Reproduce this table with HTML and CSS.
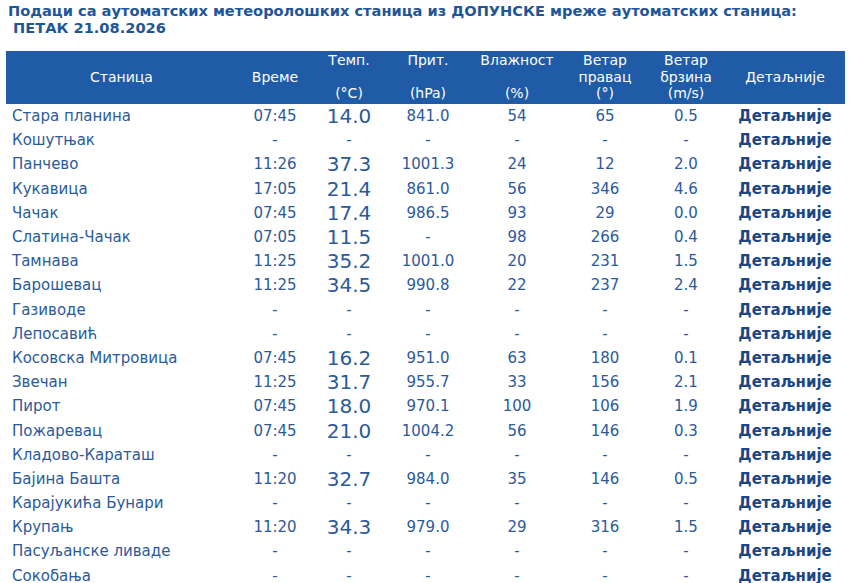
FILE: index.html
```html
<!DOCTYPE html>
<html lang="sr">
<head>
<meta charset="utf-8">
<title>Подаци са аутоматских метеоролошких станица</title>
<link rel="stylesheet" href="styles.css">
</head>
<body>
<h1 class="title">Подаци са аутоматских метеоролошких станица из ДОПУНСКЕ мреже аутоматских станица:<br>&nbsp;ПЕТАК 21.08.2026</h1>
<table class="data">
<colgroup>
<col class="c-name"><col class="c-time"><col class="c-temp"><col class="c-pres"><col class="c-hum"><col class="c-wdir"><col class="c-wspd"><col class="c-det">
</colgroup>
<thead>
<tr>
<th>Станица</th>
<th>Време</th>
<th>Темп.<br><br>(°C)</th>
<th>Прит.<br><br>(hPa)</th>
<th>Влажност<br><br>(%)</th>
<th>Ветар<br>правац<br>(°)</th>
<th>Ветар<br>брзина<br>(m/s)</th>
<th>Детаљније</th>
</tr>
</thead>
<tbody>
<tr><td class="name">Стара планина</td><td>07:45</td><td class="temp">14.0</td><td>841.0</td><td>54</td><td>65</td><td>0.5</td><td class="det">Детаљније</td></tr>
<tr><td class="name">Кошутњак</td><td>-</td><td class="temp dash">-</td><td>-</td><td>-</td><td>-</td><td>-</td><td class="det">Детаљније</td></tr>
<tr><td class="name">Панчево</td><td>11:26</td><td class="temp">37.3</td><td>1001.3</td><td>24</td><td>12</td><td>2.0</td><td class="det">Детаљније</td></tr>
<tr><td class="name">Кукавица</td><td>17:05</td><td class="temp">21.4</td><td>861.0</td><td>56</td><td>346</td><td>4.6</td><td class="det">Детаљније</td></tr>
<tr><td class="name">Чачак</td><td>07:45</td><td class="temp">17.4</td><td>986.5</td><td>93</td><td>29</td><td>0.0</td><td class="det">Детаљније</td></tr>
<tr><td class="name">Слатина-Чачак</td><td>07:05</td><td class="temp">11.5</td><td>-</td><td>98</td><td>266</td><td>0.4</td><td class="det">Детаљније</td></tr>
<tr><td class="name">Тамнава</td><td>11:25</td><td class="temp">35.2</td><td>1001.0</td><td>20</td><td>231</td><td>1.5</td><td class="det">Детаљније</td></tr>
<tr><td class="name">Барошевац</td><td>11:25</td><td class="temp">34.5</td><td>990.8</td><td>22</td><td>237</td><td>2.4</td><td class="det">Детаљније</td></tr>
<tr><td class="name">Газиводе</td><td>-</td><td class="temp dash">-</td><td>-</td><td>-</td><td>-</td><td>-</td><td class="det">Детаљније</td></tr>
<tr><td class="name">Лепосавић</td><td>-</td><td class="temp dash">-</td><td>-</td><td>-</td><td>-</td><td>-</td><td class="det">Детаљније</td></tr>
<tr><td class="name">Косовска Митровица</td><td>07:45</td><td class="temp">16.2</td><td>951.0</td><td>63</td><td>180</td><td>0.1</td><td class="det">Детаљније</td></tr>
<tr><td class="name">Звечан</td><td>11:25</td><td class="temp">31.7</td><td>955.7</td><td>33</td><td>156</td><td>2.1</td><td class="det">Детаљније</td></tr>
<tr><td class="name">Пирот</td><td>07:45</td><td class="temp">18.0</td><td>970.1</td><td>100</td><td>106</td><td>1.9</td><td class="det">Детаљније</td></tr>
<tr><td class="name">Пожаревац</td><td>07:45</td><td class="temp">21.0</td><td>1004.2</td><td>56</td><td>146</td><td>0.3</td><td class="det">Детаљније</td></tr>
<tr><td class="name">Кладово-Караташ</td><td>-</td><td class="temp dash">-</td><td>-</td><td>-</td><td>-</td><td>-</td><td class="det">Детаљније</td></tr>
<tr><td class="name">Бајина Башта</td><td>11:20</td><td class="temp">32.7</td><td>984.0</td><td>35</td><td>146</td><td>0.5</td><td class="det">Детаљније</td></tr>
<tr><td class="name">Карајукића Бунари</td><td>-</td><td class="temp dash">-</td><td>-</td><td>-</td><td>-</td><td>-</td><td class="det">Детаљније</td></tr>
<tr><td class="name">Крупањ</td><td>11:20</td><td class="temp">34.3</td><td>979.0</td><td>29</td><td>316</td><td>1.5</td><td class="det">Детаљније</td></tr>
<tr><td class="name">Пасуљанске ливаде</td><td>-</td><td class="temp dash">-</td><td>-</td><td>-</td><td>-</td><td>-</td><td class="det">Детаљније</td></tr>
<tr><td class="name">Сокобања</td><td>-</td><td class="temp dash">-</td><td>-</td><td>-</td><td>-</td><td>-</td><td class="det">Детаљније</td></tr>
</tbody>
</table>
</body>
</html>
```
FILE: styles.css
```css
html, body {
  margin: 0;
  padding: 0;
  background: #ffffff;
}
body {
  font-family: "DejaVu Sans", Verdana, sans-serif;
  color: #2b5a9a;
}
.title {
  margin: 3px 0 0 8px;
  font-size: 14.6px;
  line-height: 16.5px;
  font-weight: bold;
  color: #1f5599;
}
.data {
  margin: 15px 0 0 6px;
  width: 839px;
  border-collapse: collapse;
  table-layout: fixed;
}
.c-name { width: 231px; }
.c-time { width: 76px; }
.c-temp { width: 72px; }
.c-pres { width: 86px; }
.c-hum { width: 92px; }
.c-wdir { width: 84px; }
.c-wspd { width: 78px; }
.c-det { width: 120px; }
.data thead th {
  background: #1f5ba6;
  color: #ffffff;
  font-weight: normal;
  font-size: 14px;
  line-height: 16.5px;
  padding: 1px 0 2px;
  text-align: center;
  vertical-align: middle;
  height: 50px;
}
.data tbody td {
  height: 24.2px;
  padding: 0;
  font-size: 15px;
  line-height: 18px;
  text-align: center;
  vertical-align: middle;
  white-space: nowrap;
}
.data tbody td.name {
  text-align: left;
  padding-left: 6px;
}
.data tbody td.temp {
  font-size: 20px;
  line-height: 20px;
}
.data tbody td.temp.dash {
  font-size: 15px;
}
.data tbody td.det {
  font-weight: bold;
  color: #1b4685;
}
```
